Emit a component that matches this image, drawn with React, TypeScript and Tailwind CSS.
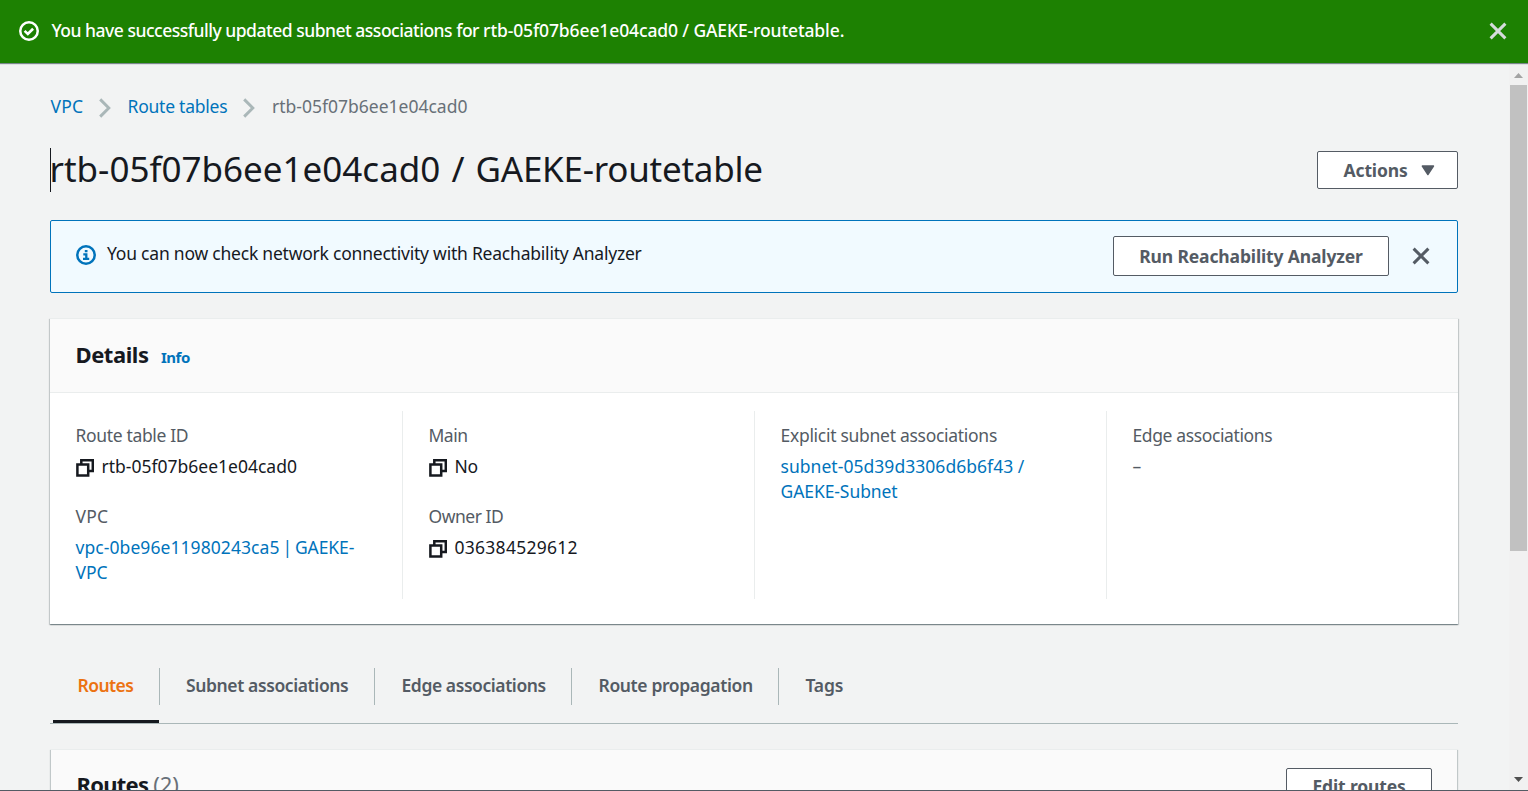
import type { ReactNode } from "react";

function CloseIcon() {
  return (
    <svg width="18" height="18" viewBox="0 0 18 18" fill="none" stroke="currentColor" strokeWidth="3" className="block shrink-0">
      <path d="M1.6 1.6l14.8 14.8M16.4 1.6l-14.8 14.8" />
    </svg>
  );
}

function CheckCircle() {
  return (
    <svg width="20" height="20" viewBox="0 0 20 20" fill="none" stroke="currentColor" strokeWidth="2.5" className="block shrink-0">
      <circle cx="10" cy="10" r="8.75" />
      <path d="M5.6 9.9l3.2 3 5.3-5.2" strokeWidth="2.6" />
    </svg>
  );
}

function InfoCircle() {
  return (
    <svg width="20" height="20" viewBox="0 0 20 20" fill="none" stroke="#0073bb" strokeWidth="2.5" className="block shrink-0">
      <circle cx="10" cy="10" r="8.75" />
      <path d="M8.8 6.1h2.7M7.3 9.3h3v4.3M7 13.9h6.2" strokeWidth="2.3" />
    </svg>
  );
}

function Chevron() {
  return (
    <svg width="12" height="20" viewBox="0 0 12 20" fill="none" stroke="#aab7b8" strokeWidth="2.9" className="mt-[3px] block shrink-0">
      <path d="M1.2 1.4l8.6 8.6-8.6 8.6" />
    </svg>
  );
}

function CopyIcon() {
  return (
    <svg width="18" height="18" viewBox="0 0 18 18" fill="none" stroke="#16191f" strokeWidth="2.5" className="mt-[5px] block shrink-0">
      <path d="M1.4 5.6h10.8v11H1.4z" />
      <path d="M5.3 5.6V1.3h11.5v10.6h-4.6" />
    </svg>
  );
}

function Field({ label, labelClass, children }: { label: string; labelClass: string; children: ReactNode }) {
  return (
    <div className="h-[81px]">
      <div className={`text-[#545b64] ${labelClass}`}>{label}</div>
      <div className="mt-[6px] whitespace-nowrap">{children}</div>
    </div>
  );
}

function Column({ first, children }: { first?: boolean; children: ReactNode }) {
  return (
    <div className={first ? "pl-[25.5px] pt-3" : "border-l border-[#eaeded] pl-[25.5px] pt-3"}>{children}</div>
  );
}

const tabs = [
  { label: "Routes", box: "w-[106px] pl-[24.5px] tracking-[-0.55px] text-[#ec7211] border-b-[3px] border-[#16191f]" },
  { label: "Subnet associations", box: "w-[215px] pl-[27px] tracking-[-0.39px]" },
  { label: "Edge associations", box: "w-[197px] pl-[27.5px] tracking-[-0.42px]" },
  { label: "Route propagation", box: "w-[207px] pl-[27.5px] tracking-[-0.37px]" },
  { label: "Tags", box: "pl-[27.5px] tracking-[-0.2px]" },
];

const link = "text-[#0073bb]";

export default function App() {
  return (
    <div className="flex h-[791px] w-[1528px] flex-col overflow-hidden border-b border-[#545b64] bg-[#f2f3f3] font-['Noto_Sans','Open_Sans',sans-serif] text-[17.5px] leading-[25px] text-[#16191f]">
      <header className="z-10 flex h-[63px] shrink-0 items-start bg-[#1d8102] pl-[19px] pr-[21px] pt-[18px] text-white shadow-[0_1px_1px_0_rgba(0,28,36,0.5)]">
        <span className="mt-[3px]"><CheckCircle /></span>
        <p className="ml-[12.5px] flex-1 whitespace-nowrap font-medium tracking-[-0.49px]">
          You have successfully updated subnet associations for{" "}
          <span className="tracking-[-0.12px]">rtb-05f07b6ee1e04cad0 / GAEKE-routetable.</span>
        </p>
        <button className="mt-1 text-[#d5dbdb]" aria-label="Dismiss"><CloseIcon /></button>
      </header>

      <div className="flex min-h-0 flex-1">
        <main className="min-w-0 flex-1 overflow-hidden pl-[50px] pr-[51px]">
          <nav className="mt-[31px] flex h-[25px] items-center gap-4">
            <a className={`${link} w-[33px] pl-[0.5px] tracking-[0.2px]`}>VPC</a>
            <Chevron />
            <a className={`${link} w-[100px] whitespace-nowrap pl-[0.5px] tracking-[-0.24px]`}>Route tables</a>
            <Chevron />
            <span className="ml-[1px] text-[#687078]">rtb-05f07b6ee1e04cad0</span>
          </nav>

          <div className="mt-[29px] flex h-11 w-[1408px] items-center justify-between">
            <h1 className="h-11 whitespace-nowrap border-l border-[#16191f] text-[35px] leading-[42px] [word-spacing:2px]">
              <span className="-ml-[1.5px]">rtb-05f07b6ee1e04cad0 / </span>
              <span className="tracking-[-0.25px]">GAEKE-routetable</span>
            </h1>
            <button className="flex h-[38px] w-[141px] items-center rounded-[2px] border border-[#545b64] bg-white pl-[25.5px] font-bold tracking-[-0.12px] text-[#545b64]">
              <span className="w-[77.5px] text-left leading-[34px]">Actions</span>
              <svg width="14" height="11" viewBox="0 0 14 11" fill="#545b64" stroke="#545b64" strokeLinejoin="round" strokeWidth="1.4">
                <path d="M1.3 1h11.2L6.9 9.6z" />
              </svg>
            </button>
          </div>

          <section className="mt-[28px] flex h-[73px] w-[1408px] items-start rounded-[2px] border border-[#0073bb] bg-[#f1faff] pl-[25px] pr-[27px]">
            <span className="mt-[24px]"><InfoCircle /></span>
            <p className="ml-[11px] mt-5 flex-1 whitespace-nowrap tracking-[-0.22px]">
              You can now check network connectivity with Reachability Analyzer
            </p>
            <button className="mt-[15px] h-10 w-[276px] rounded-[2px] border border-[#545b64] bg-white font-bold leading-[37px] tracking-[-0.14px] text-[#545b64]">
              Run Reachability Analyzer
            </button>
            <button className="ml-[23px] mt-[26px] text-[#545b64]" aria-label="Dismiss"><CloseIcon /></button>
          </section>

          <section className="mt-[25px] h-[306px] w-[1408px] border-t border-[#eaeded] bg-white shadow-[0_1px_1px_0_rgba(0,28,36,0.3),1px_1px_1px_0_rgba(0,28,36,0.15),-1px_1px_1px_0_rgba(0,28,36,0.15)]">
            <div className="flex h-[74px] items-baseline border-b border-[#eaeded] bg-[#fafafa] pl-[25.5px] pt-[19px]">
              <h2 className="w-[85.5px] text-[22px] font-bold leading-8 tracking-[-0.45px]">Details</h2>
              <a className={`${link} text-[15px] font-bold tracking-[-0.5px]`}>Info</a>
            </div>
            <div className="mt-[18px] grid h-[188px] grid-cols-4">
              <Column first>
                <Field label="Route table ID" labelClass="tracking-[-0.34px]">
                  <span className="flex gap-2"><CopyIcon />rtb-05f07b6ee1e04cad0</span>
                </Field>
                <Field label="VPC" labelClass="tracking-[0.2px]">
                  <a className={link}>
                    <span className="tracking-[0.07px]">vpc-0be96e11980243ca5</span>
                    <span className="tracking-[-0.1px] [word-spacing:-1.5px]"> | GAEKE-</span>
                    <br />VPC
                  </a>
                </Field>
              </Column>
              <Column>
                <Field label="Main" labelClass="tracking-[-0.5px]">
                  <span className="flex gap-2 tracking-[-0.4px]"><CopyIcon />No</span>
                </Field>
                <Field label="Owner ID" labelClass="tracking-[-0.46px]">
                  <span className="flex gap-2 tracking-[0.27px]"><CopyIcon />036384529612</span>
                </Field>
              </Column>
              <Column>
                <Field label="Explicit subnet associations" labelClass="tracking-[-0.29px]">
                  <a className={`${link} tracking-[0.04px]`}>subnet-05d39d3306d6b6f43 /<br /><span className="tracking-[-0.08px]">GAEKE-Subnet</span></a>
                </Field>
              </Column>
              <Column>
                <Field label="Edge associations" labelClass="tracking-[-0.38px]">
                  <span className="text-[#545b64]">–</span>
                </Field>
              </Column>
            </div>
          </section>

          <div className="mt-[44px] flex h-[56px] w-[1408px] border-b border-[#aab7b8] pl-[3px] font-semibold text-[#545b64]">
            {tabs.map((t, i) => (
              <div key={t.label} className="flex">
                {i > 0 && <span className="h-[37px] w-px bg-[#aab7b8]" />}
                <div className={`h-[55px] whitespace-nowrap pt-[5px] ${t.box} ${i > 0 ? "-ml-px" : ""}`}>{t.label}</div>
              </div>
            ))}
          </div>

          <section className="ml-[1px] mt-[25px] flex h-[90px] w-[1406px] justify-between border-t border-[#eaeded] bg-[#fafafa] pl-[25.5px] pr-[25px] shadow-[1px_1px_1px_0_rgba(0,28,36,0.2),-1px_1px_1px_0_rgba(0,28,36,0.2)]">
            <h2 className="pt-[18px] text-[22px] font-bold leading-8 tracking-[-0.75px]">
              Routes <span className="font-normal tracking-normal text-[#687078]">(2)</span>
            </h2>
            <button className="mt-[18px] h-[38px] w-[146px] rounded-[2px] border border-[#545b64] bg-white font-bold leading-[34px] tracking-[-0.15px] text-[#545b64]">
              <span className="block h-9">Edit routes</span>
            </button>
          </section>
        </main>

        <aside className="flex w-[19px] shrink-0 flex-col bg-[#f1f1f1] pl-px pr-px pt-[3px]">
          <svg width="17" height="19" viewBox="0 0 17 19" fill="#a3a3a3"><path d="M4 12h9L8.5 7z" /></svg>
          <div className="h-[466px] bg-[#c1c1c1]" />
          <div className="flex-1" />
          <svg width="17" height="17" viewBox="0 0 17 17" fill="#505050"><path d="M4 4h9L8.5 9z" /></svg>
        </aside>
      </div>
    </div>
  );
}
